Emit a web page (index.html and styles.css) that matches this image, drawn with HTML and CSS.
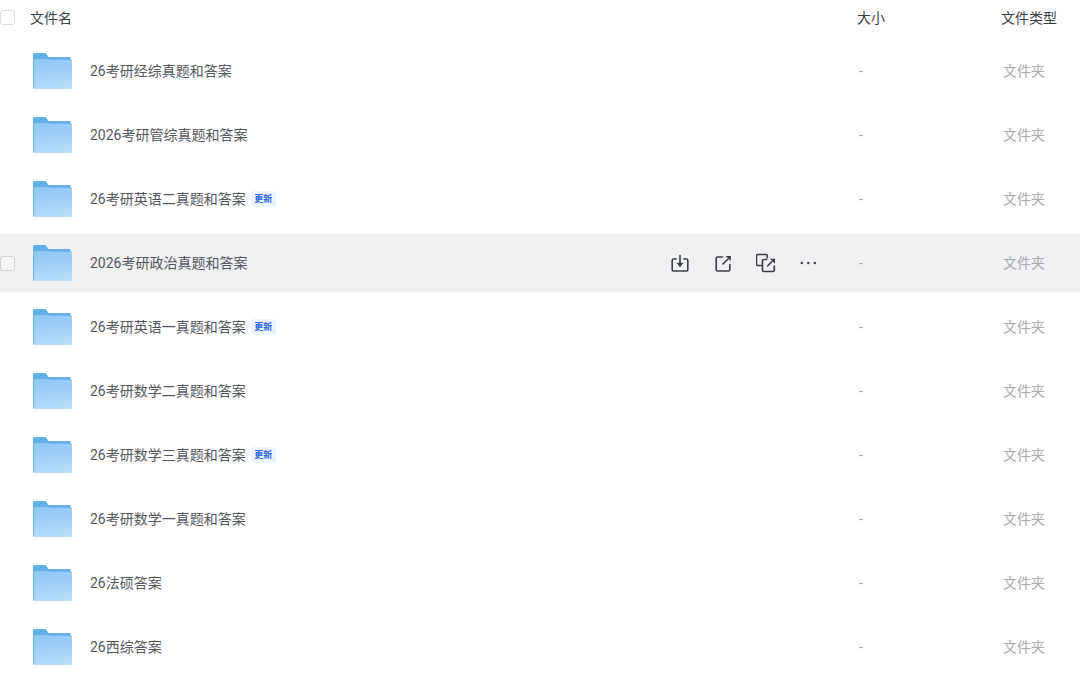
FILE: index.html
```html
<!DOCTYPE html>
<html lang="zh">
<head>
<meta charset="utf-8">
<title>文件列表</title>
<link rel="stylesheet" href="styles.css">
</head>
<body>
<svg class="defs" width="0" height="0" aria-hidden="true">
  <defs>
    <linearGradient id="fb" x1="0" y1="0" x2="0.15" y2="1"><stop offset="0" stop-color="#8fc8f4"/><stop offset="0.5" stop-color="#9ed0f6"/><stop offset="1" stop-color="#b6dcfa"/></linearGradient>
    <symbol id="folder" viewBox="0 0 39 36">
      <path d="M1 0H12.500L15.500 4H36.500Q37.600 4 37.600 5.500V8H0V1Q0 0 1 0Z" fill="#62afeb"/>
      <path d="M0 6H15L17 6.800H39V35Q39 36 38 36H1L0 35Z" fill="url(#fb)"/>
      <path d="M0 1V35L1 36V3Z" fill="#6ab4ee"/>
    </symbol>
  </defs>
</svg>
<main class="table">
  <div class="row head">
    <span class="check"></span>
    <span class="name">文件名</span>
    <span class="size">大小</span>
    <span class="type">文件类型</span>
  </div>
  <div class="row item">
    <svg class="folder"><use href="#folder"/></svg>
    <span class="name">26考研经综真题和答案</span>
    <span class="size">-</span><span class="type">文件夹</span>
  </div>
  <div class="row item">
    <svg class="folder"><use href="#folder"/></svg>
    <span class="name">2026考研管综真题和答案</span>
    <span class="size">-</span><span class="type">文件夹</span>
  </div>
  <div class="row item">
    <svg class="folder"><use href="#folder"/></svg>
    <span class="name">26考研英语二真题和答案<em class="badge">更新</em></span>
    <span class="size">-</span><span class="type">文件夹</span>
  </div>
  <div class="row item hover">
    <span class="check"></span>
    <svg class="folder"><use href="#folder"/></svg>
    <span class="name">2026考研政治真题和答案</span>
    <div class="actions">
      <svg class="act" viewBox="0 0 20 20"><path d="M6 6H3.500Q2.200 6 2.200 7.300V16.700Q2.200 18 3.500 18H16.500Q17.800 18 17.800 16.700V7.300Q17.800 6 16.500 6H14"/><path d="M10 2.500V12"/><path class="solid" d="M6.500 9.800H13.500L10 14.200Z"/></svg>
      <svg class="act" viewBox="0 0 20 20"><path d="M9.500 4H4.500Q3.200 4 3.200 5.300V16.700Q3.200 18 4.500 18H15.500Q16.800 18 16.800 16.700V11.500"/><path d="M10 11L15 6"/><path class="solid" d="M12.800 3H17.800V8Z"/></svg>
      <svg class="act" viewBox="0 0 20 20"><path d="M5.500 12.500H1.800Q0.500 12.500 0.500 11.200V2.800Q0.500 1.500 1.800 1.500H10Q11.300 1.500 11.300 2.800V5"/><path d="M10.500 6.500H7.800Q6.500 6.500 6.500 7.800V17.200Q6.500 18.500 7.800 18.500H17Q18.300 18.500 18.300 17.200V13"/><path d="M11.500 13L16 8.500"/><path class="solid" d="M14 5.800H19V10.800Z"/></svg>
      <svg class="act" viewBox="0 0 20 20"><circle class="solid" cx="2.800" cy="10" r="1.200"/><circle class="solid" cx="9.300" cy="10" r="1.200"/><circle class="solid" cx="15.800" cy="10" r="1.200"/></svg>
    </div>
    <span class="size">-</span><span class="type">文件夹</span>
  </div>
  <div class="row item">
    <svg class="folder"><use href="#folder"/></svg>
    <span class="name">26考研英语一真题和答案<em class="badge">更新</em></span>
    <span class="size">-</span><span class="type">文件夹</span>
  </div>
  <div class="row item">
    <svg class="folder"><use href="#folder"/></svg>
    <span class="name">26考研数学二真题和答案</span>
    <span class="size">-</span><span class="type">文件夹</span>
  </div>
  <div class="row item">
    <svg class="folder"><use href="#folder"/></svg>
    <span class="name">26考研数学三真题和答案<em class="badge">更新</em></span>
    <span class="size">-</span><span class="type">文件夹</span>
  </div>
  <div class="row item">
    <svg class="folder"><use href="#folder"/></svg>
    <span class="name">26考研数学一真题和答案</span>
    <span class="size">-</span><span class="type">文件夹</span>
  </div>
  <div class="row item">
    <svg class="folder"><use href="#folder"/></svg>
    <span class="name">26法硕答案</span>
    <span class="size">-</span><span class="type">文件夹</span>
  </div>
  <div class="row item">
    <svg class="folder"><use href="#folder"/></svg>
    <span class="name">26西综答案</span>
    <span class="size">-</span><span class="type">文件夹</span>
  </div>
</main>
</body>
</html>
```
FILE: styles.css
```css
html, body {
  margin: 0;
  height: 683px;
  overflow: hidden;
  background: #fff;
  font-family: Roboto, "Noto Sans CJK SC", "Noto Sans", sans-serif;
  font-size: 14px;
  color: #55575c;
}
.defs { display: block; height: 0; }
.table { display: flex; flex-direction: column; }
.row {
  display: grid;
  grid-template-columns: 857px 144px 1fr;
  align-items: center;
  position: relative;
}
.row > span { padding-bottom: 2px; }
.head {
  height: 36px;
  margin-bottom: 3px;
  color: #3a3d44;
}
.head .name { padding-left: 30px; }
.item {
  height: 58px;
  margin: 3px 0;
}
.item .name {
  padding-left: 90px;
  display: flex;
  align-items: center;
}
.item .size,
.item .type { padding-left: 2px; color: #a8a9ab; }
.row > .size { padding-bottom: 0; }
.head > .size { padding-bottom: 2px; }
.hover { background: #eff0f2; }
.row > .check {
  position: absolute;
  left: 0;
  top: 50%;
  margin-top: -8.5px;
  box-sizing: border-box;
  width: 15px;
  height: 15px;
  padding: 0;
  border: 1px solid #dcdde0;
  border-radius: 3px;
  background: #fff;
}
.hover > .check { margin-top: -7.5px; background: #f6f6f7; border-color: #cfd1d4; }
.folder {
  position: absolute;
  left: 33px;
  top: 11px;
  width: 39px;
  height: 36px;
  filter: blur(0.4px);
}
.badge {
  margin: 2px 0 0 5px;
  font-style: normal;
  font-weight: 700;
  font-size: 9px;
  line-height: 16px;
  height: 16px;
  padding: 0 3px;
  width: 19px;
  text-align: center;
  border-radius: 3px;
  background: #eef4ff;
  color: #2f66e6;
}
.actions {
  position: absolute;
  left: 670px;
  top: 19px;
  display: flex;
  gap: 23px;
}
.act {
  width: 20px;
  height: 20px;
  fill: none;
  stroke: #3a3d44;
  stroke-width: 1.6;
  stroke-linecap: round;
  stroke-linejoin: round;
}
.act .solid { fill: #3a3d44; stroke: none; }
```
